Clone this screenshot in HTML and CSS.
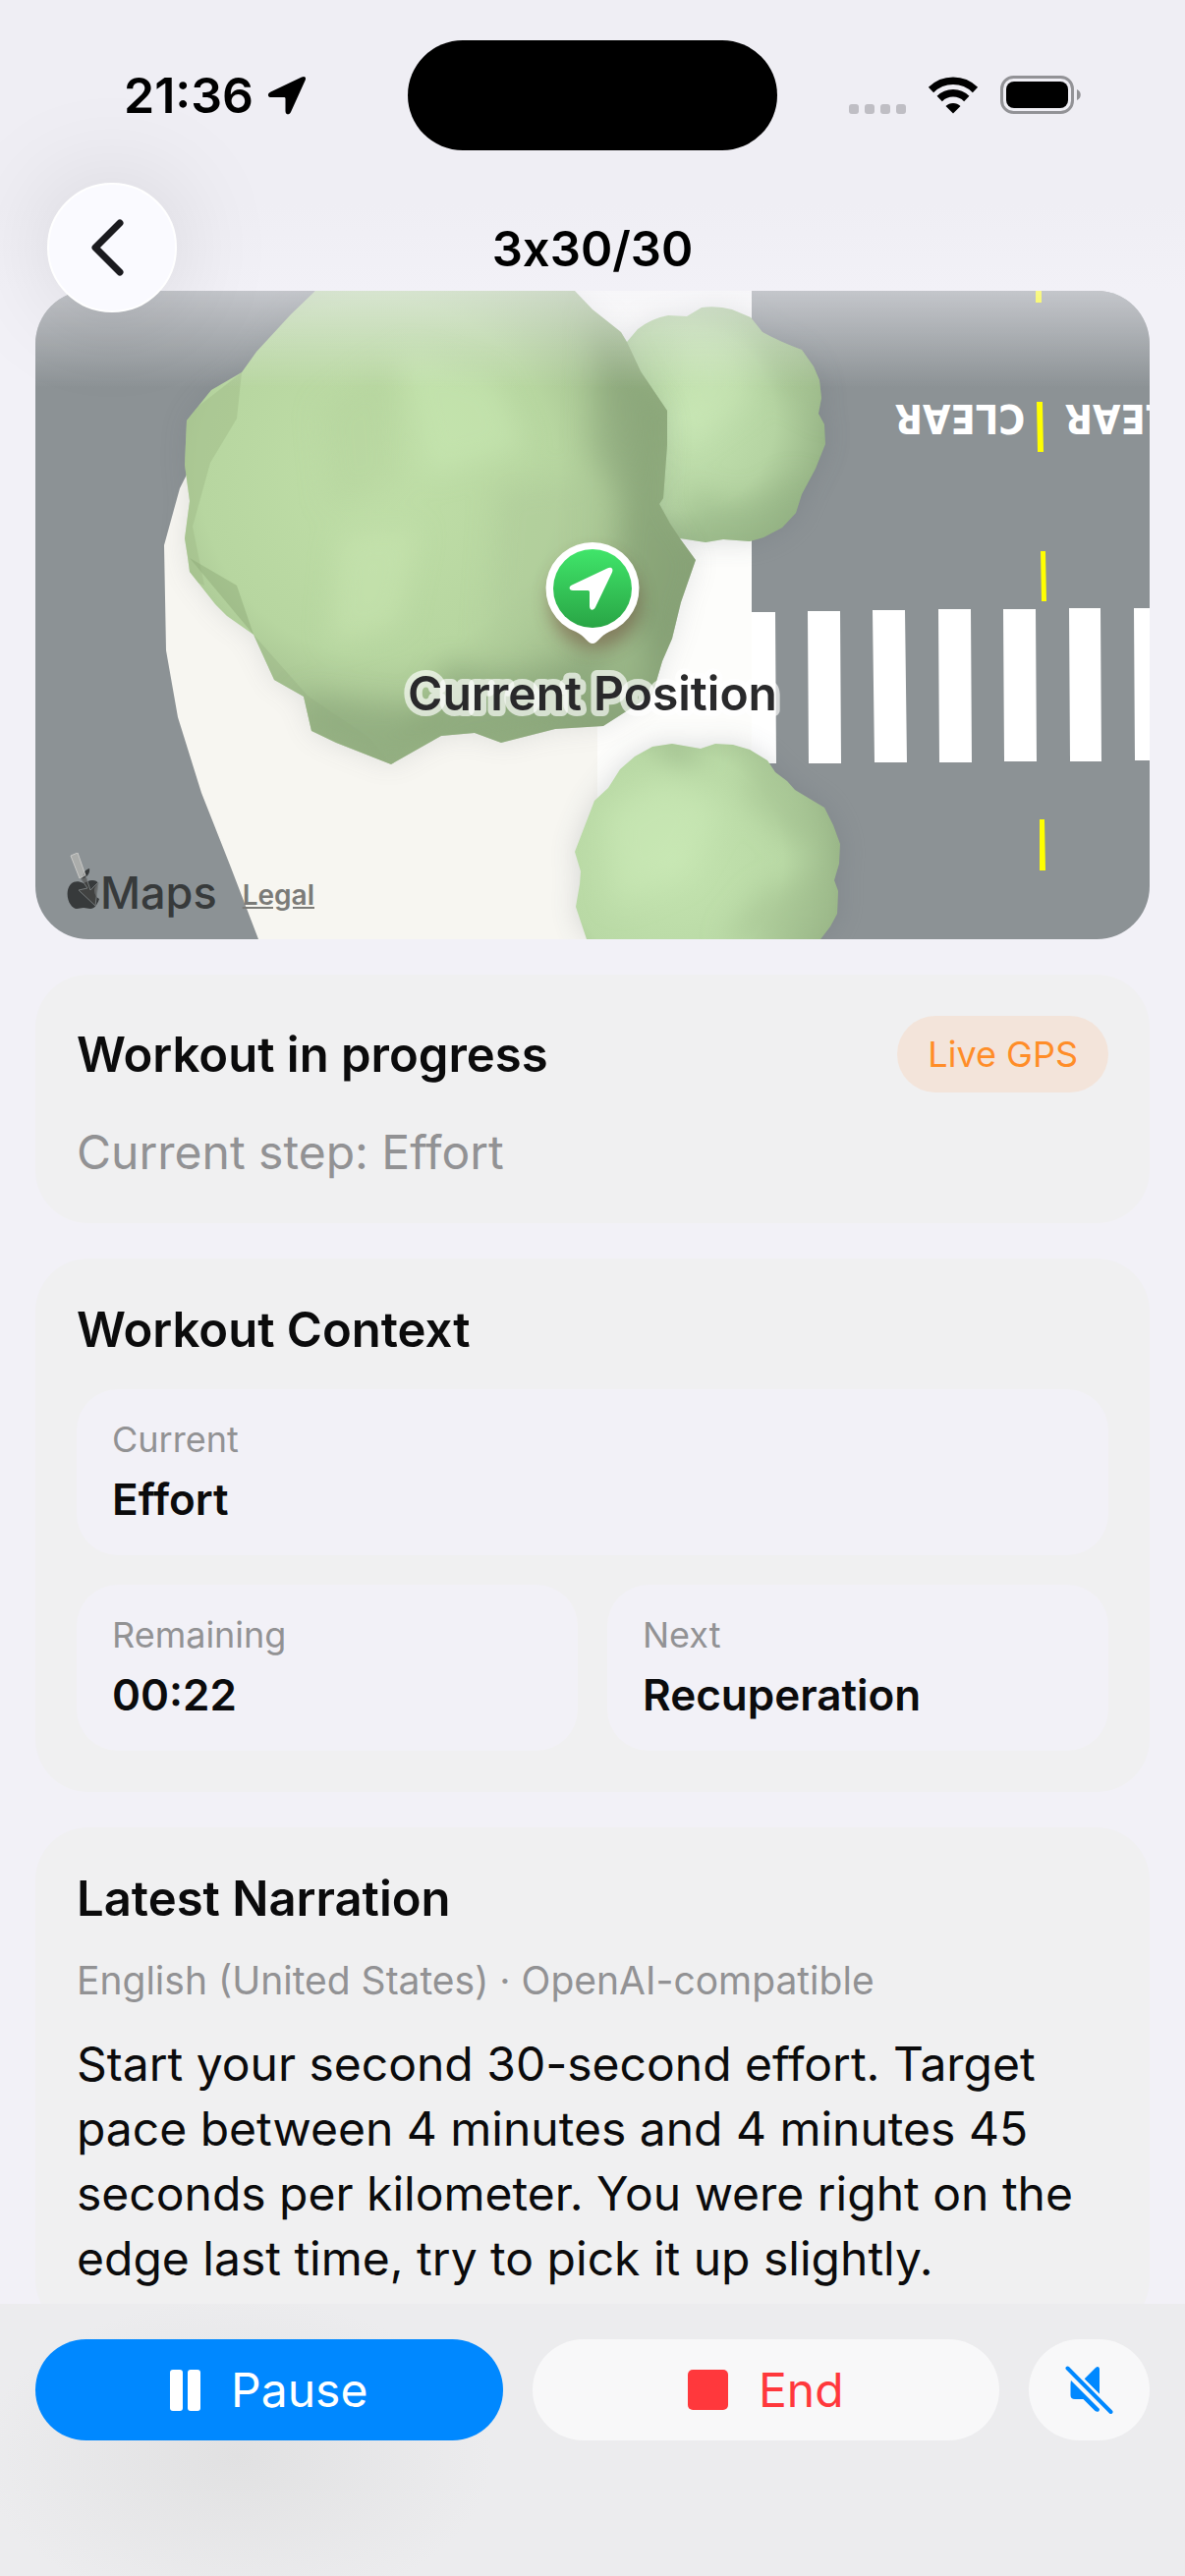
FILE: index.html
```html
<!DOCTYPE html>
<html lang="en">
	<head>
		<meta charset="UTF-8">
		<meta name="viewport" content="width=device-width, initial-scale=1">
		<title>3x30/30</title>
		<link rel="stylesheet" href="styles.css">
	</head>
	<body>
	<div class="screen">

		<header class="header">
			<div class="status">
				<div class="status-left">
					<span>21:36</span>
					<svg class="location" width="40" height="40" viewBox="0 0 40 40"><path d="M35 1.500 3.500 16.500C-.5 18.500.5 22 4 22H17c1 0 1.500.5 1.500 1.500V36c0 4 4 4.500 5.500 1L38.500 5C40 1.500 38 0 35 1.500z"/></svg>
				</div>
				<div class="island"></div>
				<div class="status-right">
					<svg class="dots" width="58" height="12" viewBox="0 0 58 12"><rect width="10" height="10" y="1" rx="3"/><rect x="16" width="10" height="10" y="1" rx="3"/><rect x="32" width="10" height="10" y="1" rx="3"/><rect x="48" width="10" height="10" y="1" rx="3"/></svg>
					<svg width="52" height="38" viewBox="0 0 52 38">
						<g fill="none" stroke="#000" stroke-width="7.500"><path d="M3.500 13.500a32 32 0 0 1 45 0"/><path d="M12.200 22.500a19.500 19.500 0 0 1 27.600 0"/></g>
						<path d="M26 37.500 18.500 30a10.600 10.600 0 0 1 15 0z"/>
					</svg>
					<svg width="83" height="40" viewBox="0 0 83 40">
						<rect x="1.500" y="1.500" width="72" height="36" rx="12" fill="none" stroke="#929296" stroke-width="3"/>
						<rect x="6" y="6" width="63" height="27" rx="8"/>
						<path d="M78 14c5 2 5 9 0 11z" fill="#929296"/>
					</svg>
				</div>
			</div>
			<nav class="nav">
				<button class="back" type="button" aria-label="Back">
					<svg width="34" height="58" viewBox="0 0 34 58"><path d="M30 4 5 29l25 25" fill="none" stroke="#1b1b1f" stroke-width="7" stroke-linecap="round" stroke-linejoin="round"/></svg>
				</button>
				<h1>3x30/30</h1>
			</nav>
		</header>

		<main class="content">

			<section class="map">
				<svg class="map-canvas" viewBox="0 0 1134 660" preserveAspectRatio="xMidYMid slice">
					<defs>
						<linearGradient id="pinFill" x1="0" y1="0" x2="0" y2="1"><stop offset="0" stop-color="#40e56a"/><stop offset="1" stop-color="#29a545"/></linearGradient>
						<radialGradient id="leafBig" gradientUnits="userSpaceOnUse" cx="350" cy="190" r="330"><stop offset="0" stop-color="#c0dfa8"/><stop offset=".55" stop-color="#b7d6a0"/><stop offset="1" stop-color="#8ea77c"/></radialGradient>
						<radialGradient id="leafTop" gradientUnits="userSpaceOnUse" cx="660" cy="130" r="155"><stop offset="0" stop-color="#c5e4b2"/><stop offset=".6" stop-color="#b5d4a2"/><stop offset="1" stop-color="#93b082"/></radialGradient>
						<radialGradient id="leafLow" gradientUnits="userSpaceOnUse" cx="650" cy="580" r="185"><stop offset="0" stop-color="#c4e4b0"/><stop offset=".6" stop-color="#b9d9a5"/><stop offset="1" stop-color="#91ad80"/></radialGradient>
						<filter id="soft" x="-30%" y="-30%" width="160%" height="160%"><feGaussianBlur stdDeviation="14"/></filter>
						<filter id="pinShadow" x="-50%" y="-50%" width="200%" height="200%"><feGaussianBlur stdDeviation="9"/></filter>
						<path id="treeBig" d="M285 0 260 24 225 62 210 83 179 101 154 132 152 177 157 214 152 252 155 271 157 286 183 319 195 331 222 350 243 396 273 413 281 448 306 460 362 482 413 453 447 450 474 460 529 446 578 443 628 411 638 377 648 354 657 317 672 274 656 252 646 237 635 217 639 211 643 157 643 122 616 82 602 52 596 42 567 19 549 0z"/>
						<path id="treeTop" d="M602 52 613 39Q627 28 644 25L663 26 678 17Q694 15 709 19L728 27 740 42Q758 52 780 60L792 77 798 91 800 109 797 125 803 136 804 156 794 181 780 207 774 226 760 241 741 251 727 255 700 253 682 256 656 252 590 200z"/>
						<path id="treeLow" d="M569 519 583 506 595 487 610 474 628 464 648 461 677 466 692 461 710 462 727 467 745 478 753 490 765 499 773 508 803 526 812 544 819 563 818 583 813 600 817 611 816 634 809 647 799 660H561L550 627 554 604 555 591 549 571z"/>
						<clipPath id="clipBig"><use href="#treeBig"/></clipPath>
						<clipPath id="clipTop"><use href="#treeTop"/></clipPath>
						<clipPath id="clipLow"><use href="#treeLow"/></clipPath>
					</defs>

					<!-- ground -->
					<rect width="1134" height="660" fill="#8c9295"/>
					<path d="M285 0H729V660H227L199 587 169 511 145 434 133 366 131 259 147 201 154 187z" fill="#f7f6f1"/>
					<rect x="572" width="157" height="660" fill="#fdfdfb"/>
					<path d="M549 0h23v30h-23z" fill="#fdfdfb"/>

					<!-- crossing -->
					<g fill="#fff">
						<path d="M729 327h24l1 154h-25zM786 326h33l1 155h-33zM852 325h33l2 155h-33zM919 324h33l1 156h-33zM985 324h33l1 155h-33zM1052 323h32l1 156h-32zM1118 323h16v155h-15z"/>
					</g>
					<g fill="#ff0">
						<path d="M1018 0h6v12h-6zM1019 113h6l1 51h-6zM1023 265h5l1 51h-5zM1022 538h5l1 52h-6z"/>
					</g>
					<g class="road-text">
						<text transform="translate(941 131) rotate(180)" text-anchor="middle" y="15">CLEAR</text>
						<text transform="translate(1114 131) rotate(180)" text-anchor="middle" y="15">CLEAR</text>
					</g>

					<!-- trees -->
					<use href="#treeTop" fill="#56606a" opacity=".22" filter="url(#soft)"/>
					<use href="#treeTop" fill="url(#leafTop)"/>
					<g clip-path="url(#clipTop)">
						<g filter="url(#soft)">
							<path d="M670 200q50 35 100-10l40 20-60 60H650z" fill="#93b183" opacity=".45"/>
							<path d="M735 30l70 40 10 60-55-30z" fill="#a5c393" opacity=".6"/>
							<path d="M650 40l60 10 20 60-70 50z" fill="#cbeab8" opacity=".5"/>
						</g>
					</g>
					<use href="#treeLow" fill="#56606a" opacity=".22" filter="url(#soft)"/>
					<use href="#treeLow" fill="url(#leafLow)"/>
					<g clip-path="url(#clipLow)">
						<g filter="url(#soft)">
							<path d="M735 470l40 50 50 30-60 10-45-50z" fill="#a0be8e" opacity=".5"/>
							<path d="M700 660l40-50 80-20v80z" fill="#a0bd8e" opacity=".5"/>
							<path d="M580 530l60-35 60 30-40 70-70 30z" fill="#cbebb7" opacity=".5"/>
							<path d="M620 458l30 0 35 12-30 10z" fill="#88a479" opacity=".7"/>
						</g>
					</g>
					<use href="#treeBig" fill="#56606a" opacity=".14" filter="url(#soft)"/>
					<use href="#treeBig" fill="url(#leafBig)"/>
					<g clip-path="url(#clipBig)">
						<path d="M210 83 150 130V290L172 300 160 240 178 175 205 130z" fill="#a2bd8a" opacity=".55"/>
						<path d="M157 272 222 350 205 300z" fill="#8fab7a" opacity=".5"/>
						<path d="M222 350 277 412 340 455 362 482 240 430z" fill="#98b284" opacity=".4"/>
						<g filter="url(#soft)">
							<path d="M568 20 650 120 645 220 680 275 640 400 600 430 590 330 600 200z" fill="#819c71" opacity=".6"/>
							<path d="M570 10 612 120 600 220 565 160z" fill="#90aa7e" opacity=".6"/>
							<path d="M420 380q90 30 200-40l20 90-200 40-70-10z" fill="#86a276" opacity=".6"/>
							<path d="M270 410 420 430 370 490 270 450z" fill="#8ba67a" opacity=".6"/>
							<path d="M370 60 470 90 500 160 400 190z" fill="#cdeab5" opacity=".45"/>
							<path d="M310 250 390 240 370 340 300 360z" fill="#c8e6b0" opacity=".55"/>
							<path d="M290 120 360 70 370 200 300 220z" fill="#b2cf9c" opacity=".4"/>
							<path d="M470 200 560 190 560 300 460 360z" fill="#a9c696" opacity=".4"/>
							<path d="M590 330 620 350 625 400 570 420z" fill="#abc997" opacity=".5"/>
						</g>
					</g>

					<!-- current position -->
					<ellipse cx="569" cy="316" rx="46" ry="48" fill="#6d4535" opacity=".5" filter="url(#pinShadow)"/>
					<path d="M567 256a47 47 0 0 1 17 91c-9 4-12 12-17 12s-8-8-17-12a47 47 0 0 1 17-91z" fill="#fff"/>
					<circle cx="567" cy="303" r="40" fill="url(#pinFill)"/>
					<path d="M582 282.500 546 299.500c-4 2-2.500 5.500 1 5.500h15.500q1.500 0 1.500 1.500V321c0 4.500 4 5 6 1L587 286.500c1.500-3.500-1-6-5-4z" fill="#fff"/>
					<text class="map-label" x="567" y="427" text-anchor="middle">Current Position</text>
				</svg>
				<div class="map-credit">
					<svg width="34" height="62" viewBox="0 0 34 62">
						<path d="M17 31c3-1 5-3 9-3 3 0 5 1 6 3-6 4-5 13 1 16-2 6-5 10-9 10-3 0-4-1-7-1s-4 1-7 1C5 57-1 48 1 38 3 30 9 27 17 31zM16 26c0-5 3-9 7-10 1 5-3 10-7 10z" fill="#373a3b"/>
						<path d="M4 3 11 0 19 23 13 26z" fill="#b5b5b3" fill-opacity=".75" stroke="#c9c9c7"/>
						<path d="M19 23 24 38l8-8-3 24-17-16 9-2-7-10" fill="#484846" fill-opacity=".6" stroke="#757a7b"/>
					</svg>
					<span class="map-brand">Maps</span>
					<a class="legal" href="#legal">Legal</a>
				</div>
			</section>

			<section class="card">
				<div class="card-head">
					<h2>Workout in progress</h2>
					<span class="badge">Live GPS</span>
				</div>
				<p class="step">Current step: Effort</p>
			</section>

			<section class="card">
				<h2>Workout Context</h2>
				<dl class="tiles">
					<div class="tile wide">
						<dt>Current</dt>
						<dd>Effort</dd>
					</div>
					<div class="tile">
						<dt>Remaining</dt>
						<dd>00:22</dd>
					</div>
					<div class="tile">
						<dt>Next</dt>
						<dd>Recuperation</dd>
					</div>
				</dl>
			</section>

			<section class="card">
				<h2>Latest Narration</h2>
				<p class="meta">English (United States) · OpenAI-compatible</p>
				<p class="narration">Start your second 30-second effort. Target pace between 4 minutes and 4 minutes 45 seconds per kilometer. You were right on the edge last time, try to pick it up slightly.</p>
			</section>

		</main>

		<footer class="controls">
			<button class="btn pause" type="button">
				<svg width="32" height="42" viewBox="0 0 32 42"><rect width="13" height="42" rx="3"/><rect x="18" width="13" height="42" rx="3"/></svg>
				Pause
			</button>
			<button class="btn end" type="button">
				<svg width="42" height="42" viewBox="0 0 42 42"><rect width="41" height="41" rx="5"/></svg>
				End
			</button>
			<button class="btn mute" type="button" aria-label="Mute">
				<svg width="50" height="50" viewBox="0 0 50 50">
					<path d="M19.500 13.500 31 2c2-2 4-1 4 1.500V29z"/>
					<path d="M6 15 35 44c0 3-2.500 3.500-4.500 2L18.500 34H10c-3 0-4.500-1.500-4.500-4V19c0-2 .5-4 .5-4z"/>
					<path d="M2.500 2.500 46.500 47" fill="none" stroke="#f8f8f9" stroke-width="9"/>
					<path d="M2.500 2.500 46.500 47" fill="none" stroke="#08f" stroke-width="4" stroke-linecap="round"/>
				</svg>
			</button>
		</footer>

	</div>
	</body>
</html>
```
FILE: styles.css
```css
* {
	box-sizing: border-box;
}
body {
	margin: 0;
	background: #f2f1f7;
	color: #0b0b0c;
	font-family: Inter, "Liberation Sans", sans-serif;
	font-size: 48px;
	line-height: 61px;
}
h1, h2, p, dl, dd {
	margin: 0;
}
h1, h2 {
	font-size: 49px;
	font-weight: 600;
}
/* keep the plain x between digits */
h1 {
	font-feature-settings: "calt" 0;
}
button {
	border: 0;
	padding: 0;
	font: inherit;
	cursor: pointer;
}
svg {
	display: block;
	flex: none;
}
.screen {
	display: flex;
	flex-direction: column;
	height: 100vh;
}

/* header */
.header {
	position: relative;
	z-index: 1;
	flex: none;
	background: linear-gradient(#efeef4 70%, #f2f1f7);
}
.status {
	display: grid;
	grid-template-columns: 1fr 376px 1fr;
	align-items: center;
	padding-top: 41px;
	color: #000;
	font-size: 50px;
	font-weight: 600;
}
.status-left {
	display: flex;
	align-items: center;
	gap: 14px;
	padding-left: 126px;
}
.island {
	height: 112px;
	border-radius: 56px;
	background: #000;
}
.status-right {
	display: flex;
	align-items: center;
	justify-content: flex-end;
	gap: 22px;
	padding-right: 105px;
}
.dots {
	align-self: flex-end;
	fill: #bfbec4;
}
.nav {
	display: flex;
	align-items: center;
	justify-content: center;
	height: 143px;
	padding-top: 58px;
	color: #000;
}
/* floats over the top edge of the map */
.back {
	position: absolute;
	left: 48px;
	bottom: -22px;
	display: flex;
	align-items: center;
	justify-content: center;
	width: 132px;
	height: 132px;
	padding-right: 10px;
	border: 2px solid #fff;
	border-radius: 50%;
	background: #fafaff;
	box-shadow: 0 0 110px rgba(0, 0, 0, .13);
}

/* content */
.content {
	display: flex;
	flex: 1;
	flex-direction: column;
	gap: 36px;
	min-height: 0;
	padding: 0 36px 36px;
	overflow-y: auto;
	scrollbar-width: none;
}
.content > * {
	flex: none;
}
.map {
	position: relative;
	overflow: hidden;
	border-radius: 54px;
}
.map::after {
	content: "";
	position: absolute;
	inset: 0 0 auto;
	height: 100px;
	background: linear-gradient(rgba(242, 241, 247, .55), rgba(242, 241, 247, 0));
	pointer-events: none;
}
.map-canvas {
	width: 100%;
	height: auto;
}
.map-label {
	fill: #29292b;
	font-size: 48px;
	font-weight: 600;
	stroke: rgba(255, 255, 255, .65);
	stroke-width: 12px;
	stroke-linejoin: round;
	paint-order: stroke;
}
.road-text {
	fill: #fff;
	font-family: "Liberation Sans Narrow", "DejaVu Sans Condensed", sans-serif;
	font-size: 41px;
	font-weight: 700;
}
.map-credit {
	position: absolute;
	left: 32px;
	bottom: 17px;
	display: flex;
	align-items: flex-end;
	color: #373a3b;
}
.map-credit svg {
	margin-bottom: 9px;
}
.map-brand {
	font-size: 45px;
	font-weight: 500;
}
.legal {
	margin-left: 26px;
	color: #7b7b78;
	font-size: 28px;
	font-weight: 600;
	line-height: 56px;
}

/* cards */
.card {
	display: flex;
	flex-direction: column;
	gap: 30px;
	padding: 42px;
	border-radius: 54px;
	background: #f0f0f1;
}
.card-head {
	display: flex;
	align-items: center;
	justify-content: space-between;
}
.badge {
	padding: 0 31px;
	border-radius: 39px;
	background: #f3e4da;
	color: #ff8d28;
	font-size: 36px;
	line-height: 78px;
}
.step, .meta {
	color: #929294;
}
.meta {
	font-size: 39px;
	line-height: 45px;
}
.narration {
	line-height: 66px;
}
.tiles {
	display: grid;
	grid-template-columns: 1fr 1fr;
	gap: 30px;
}
.tile {
	display: flex;
	flex-direction: column;
	gap: 12px;
	padding: 30px 36px;
	border-radius: 42px;
	background: #f2f1f7;
}
.wide {
	grid-column: span 2;
}
.tile dt {
	color: #929294;
	font-size: 36px;
	line-height: 43px;
}
.tile dd {
	font-size: 44px;
	font-weight: 600;
	line-height: 54px;
}

/* bottom bar */
.controls {
	display: flex;
	flex: none;
	gap: 30px;
	padding: 36px 36px 138px;
	background: radial-gradient(ellipse 260px 160px at 20% 56%, #e1e1e2, rgba(225, 225, 226, 0)) #ececee;
}
.btn {
	display: flex;
	flex: 1;
	align-items: center;
	justify-content: center;
	gap: 30px;
	height: 103px;
	border-radius: 52px;
	background: #f8f8f9;
}
.btn svg {
	fill: currentColor;
}
.pause {
	background: #08f;
	color: #fff;
}
.end {
	color: #ff383c;
}
.mute {
	flex: 0 0 123px;
	color: #08f;
}
```
